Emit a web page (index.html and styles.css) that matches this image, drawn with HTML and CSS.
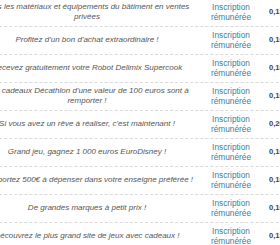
FILE: index.html
```html
<!DOCTYPE html>
<html lang="fr">
<head>
    <meta charset="UTF-8">
    <meta name="viewport" content="width=device-width, initial-scale=1.0">
    <title>Offres rémunérées</title>
    <link rel="stylesheet" href="styles.css">
</head>
<body>
    <div class="offers">
        <div class="offer-row">
            <div class="offer-title">Tous les matériaux et équipements du bâtiment en ventes privées</div>
            <div class="offer-type">Inscription rémunérée</div>
            <div class="offer-gain">0,15 €</div>
        </div>
        <div class="offer-row">
            <div class="offer-title">Profitez d'un bon d'achat extraordinaire !</div>
            <div class="offer-type">Inscription rémunérée</div>
            <div class="offer-gain">0,10 €</div>
        </div>
        <div class="offer-row">
            <div class="offer-title">Recevez gratuitement votre Robot Delimix Supercook</div>
            <div class="offer-type">Inscription rémunérée</div>
            <div class="offer-gain">0,10 €</div>
        </div>
        <div class="offer-row">
            <div class="offer-title">Des cadeaux Décathlon d'une valeur de 100 euros sont à remporter !</div>
            <div class="offer-type">Inscription rémunérée</div>
            <div class="offer-gain">0,10 €</div>
        </div>
        <div class="offer-row">
            <div class="offer-title">Si vous avez un rêve à réaliser, c'est maintenant !</div>
            <div class="offer-type">Inscription rémunérée</div>
            <div class="offer-gain">0,20 €</div>
        </div>
        <div class="offer-row">
            <div class="offer-title">Grand jeu, gagnez 1 000 euros EuroDisney !</div>
            <div class="offer-type">Inscription rémunérée</div>
            <div class="offer-gain">0,10 €</div>
        </div>
        <div class="offer-row">
            <div class="offer-title">Remportez 500€ à dépenser dans votre enseigne préférée !</div>
            <div class="offer-type">Inscription rémunérée</div>
            <div class="offer-gain">0,10 €</div>
        </div>
        <div class="offer-row">
            <div class="offer-title">De grandes marques à petit prix !</div>
            <div class="offer-type">Inscription rémunérée</div>
            <div class="offer-gain">0,10 €</div>
        </div>
        <div class="offer-row">
            <div class="offer-title">Découvrez le plus grand site de jeux avec cadeaux !</div>
            <div class="offer-type">Inscription rémunérée</div>
            <div class="offer-gain">0,15 €</div>
        </div>
    </div>
</body>
</html>
```

FILE: styles.css
```css
body {
    margin: 0;
    background-color: #fff;
    font-family: "Liberation Sans", Arial, sans-serif;
    font-size: 8.3px;
    line-height: 10px;
    overflow: hidden;
}

.offers {
    width: 360px;
    margin-top: -1px;
    margin-left: -26px;
}

.offer-row {
    display: flex;
    align-items: center;
    height: 28px;
    padding-bottom: 1px;
    box-sizing: border-box;
    border-bottom: 1px dashed #dadada;
}

.offer-title {
    width: 222px;
    padding: 0 2px;
    text-align: center;
    font-size: 8px;
    font-style: italic;
    color: #555;
}

.offer-type {
    width: 54px;
    padding-left: 4px;
    text-align: center;
    color: #3b7d9c;
}

.offer-gain {
    flex: 1;
    padding-left: 11px;
    font-size: 7.6px;
    font-weight: bold;
    color: #444;
}
```
